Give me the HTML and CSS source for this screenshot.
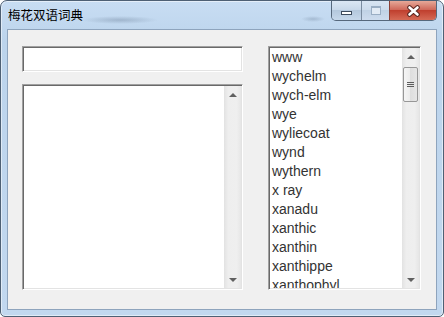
FILE: index.html
```html
<!DOCTYPE html>
<html lang="zh">

<head>
	<meta charset="UTF-8">
	<title>梅花双语词典</title>
	<link rel="stylesheet" href="styles.css">
</head>

<body>
	<div class="window">
		<div class="titlebar">
			<span class="title">梅花双语词典</span>
			<div class="caption-buttons">
				<span class="cap min"><i class="min-icon"></i></span>
				<span class="cap max"><i class="max-icon"></i></span>
				<span class="cap close">
					<svg width="15" height="12" viewBox="0 0 15 12">
						<path d="M3.5 2.5 L11.5 9.5 M11.5 2.5 L3.5 9.5" stroke="#5a2620" stroke-width="4.6" stroke-linecap="round" fill="none"/>
						<path d="M3.5 2.5 L11.5 9.5 M11.5 2.5 L3.5 9.5" stroke="#fff" stroke-width="2.6" stroke-linecap="round" fill="none"/>
					</svg>
				</span>
			</div>
		</div>
		<div class="client">
			<div class="left">
				<input class="entry sunken" type="text">
				<div class="memo sunken">
					<div class="memo-text"></div>
					<div class="vscroll">
						<span class="arrow up"></span>
						<span class="track"></span>
						<span class="arrow down"></span>
					</div>
				</div>
			</div>
			<div class="wordlist sunken">
				<ul class="words">
					<li>www</li>
					<li>wychelm</li>
					<li>wych-elm</li>
					<li>wye</li>
					<li>wyliecoat</li>
					<li>wynd</li>
					<li>wythern</li>
					<li>x ray</li>
					<li>xanadu</li>
					<li>xanthic</li>
					<li>xanthin</li>
					<li>xanthippe</li>
					<li>xanthophyl</li>
				</ul>
				<div class="vscroll">
					<span class="arrow up"></span>
					<span class="track"><span class="thumb"><i class="grip"></i></span></span>
					<span class="arrow down"></span>
				</div>
			</div>
		</div>
	</div>
</body>

</html>
```

FILE: styles.css
```css
	body {
		margin: 0;
		font-family: "Liberation Sans", Arial, sans-serif;
		background-color: #fff;
	}

	.window {
		box-sizing: border-box;
		width: 444px;
		height: 317px;
		display: flex;
		flex-direction: column;
		padding: 0 6px 6px 6px;
		border: 1px solid #4e6074;
		border-radius: 7px 7px 5px 5px;
		background: linear-gradient(#c8ddf3, #bcd4ec 40px, #c2d8ef);
		box-shadow: inset 0 0 0 1px rgba(255, 255, 255, 0.5);
	}

	.titlebar {
		height: 28px;
		flex-shrink: 0;
		display: flex;
		align-items: flex-start;
		background:
			radial-gradient(ellipse 38px 4px at 113px 19px, rgba(95, 115, 140, 0.35), transparent),
			radial-gradient(ellipse 12px 3px at 306px 18px, rgba(95, 115, 140, 0.3), transparent);
	}

	.title {
		font-family: "Noto Sans CJK SC", sans-serif;
		font-size: 12.5px;
		line-height: 28px;
		color: #000;
		margin-left: 1px;
	}

	.caption-buttons {
		margin-left: auto;
		display: flex;
		height: 19px;
		border: 1px solid #56687c;
		border-top: none;
		border-radius: 0 0 5px 5px;
		overflow: hidden;
	}

	.cap {
		display: flex;
		align-items: center;
		justify-content: center;
	}

	.min {
		width: 29px;
		border-right: 1px solid #7a8ca0;
		background: linear-gradient(#dbe7f4, #c9d9ea 45%, #b4c8dd 50%, #c6d8eb);
	}

	.min-icon {
		width: 9px;
		height: 2px;
		margin-top: 5px;
		background-color: #fff;
		border: 1px solid #3b4a5c;
	}

	.max {
		width: 27px;
		border-right: 1px solid #8b4136;
		background: linear-gradient(#d8e5f3, #cddcec 45%, #c0d2e5 50%, #cddcee);
	}

	.max-icon {
		width: 8px;
		height: 6px;
		border: 1px solid #9aaec4;
		border-top-width: 2px;
		background-color: #e2ebf5;
	}

	.close {
		width: 46px;
		background: linear-gradient(#e6a999, #d06a5b 45%, #c0402f 50%, #d56a56);
	}

	.client {
		flex: 1;
		min-height: 0;
		display: flex;
		gap: 25px;
		padding: 16px 15px 19px 14px;
		background-color: #f0f0f0;
		border: 1px solid #8ea4bd;
	}

	.sunken {
		box-sizing: border-box;
		background-color: #fff;
		border: 1px solid;
		border-color: #a0a0a0 #fff #fff #a0a0a0;
		box-shadow: inset 1px 1px #696969, inset -1px -1px #e3e3e3;
	}

	.left {
		width: 221px;
		display: flex;
		flex-direction: column;
		gap: 12px;
	}

	.entry {
		height: 26px;
		margin: 0;
		padding: 0 4px;
		font: 14px "Liberation Sans", Arial, sans-serif;
		outline: none;
	}

	.memo {
		flex: 1;
		min-height: 0;
		display: flex;
		padding: 1px;
	}

	.memo-text {
		flex: 1;
	}

	.wordlist {
		width: 153px;
		min-height: 0;
		display: flex;
		padding: 1px;
	}

	.words {
		flex: 1;
		margin: 0;
		padding: 0 0 0 2px;
		list-style: none;
		overflow: hidden;
		font-size: 14px;
		line-height: 19px;
		color: #333;
	}

	.vscroll {
		width: 17px;
		display: flex;
		flex-direction: column;
		background: linear-gradient(to right, #e2e2e2, #eeeeee 25%, #efefef 75%, #e6e6e6);
	}

	.arrow {
		height: 17px;
		flex-shrink: 0;
		display: flex;
		align-items: center;
		justify-content: center;
	}

	.arrow.up::before {
		content: "";
		border-left: 4px solid transparent;
		border-right: 4px solid transparent;
		border-bottom: 4px solid #606060;
	}

	.arrow.down::before {
		content: "";
		border-left: 4px solid transparent;
		border-right: 4px solid transparent;
		border-top: 4px solid #606060;
	}

	.track {
		flex: 1;
		display: flex;
		flex-direction: column;
	}

	.thumb {
		height: 33px;
		margin: 2px 1px 0 1px;
		border: 1px solid #979797;
		border-radius: 2px;
		background: linear-gradient(to right, #f5f5f5, #ebebeb 50%, #dedede 50%, #e6e6e6);
		display: flex;
		align-items: center;
		justify-content: center;
	}

	.grip {
		width: 7px;
		height: 5px;
		background: repeating-linear-gradient(#5c5c5c 0 1px, transparent 1px 2px);
	}
```
